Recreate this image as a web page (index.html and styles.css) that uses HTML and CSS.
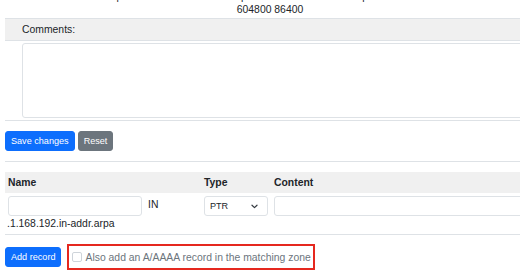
FILE: index.html
```html
<!DOCTYPE html>
<html lang="en">
<head>
  <meta charset="UTF-8" />
  <title>Zone 1.168.192.in-addr.arpa</title>
  <link rel="stylesheet" href="styles.css">
</head>
<body>
  <div class="page">
    <div class="soa">
      <div class="soa-line">
        <span class="c-ttl">1</span>
        <span class="c-name">1.168.192.in-addr.arpa</span>
        <span class="c-type">SOA</span>
        <span class="c-content">ns1.example.com. hostmaster.example.com. 2024010101 10800 3600</span>
      </div>
      <div class="soa-wrap">604800 86400</div>
    </div>

    <div class="comments-label">Comments:</div>
    <div class="comments-box">
      <textarea class="comments"></textarea>
    </div>

    <div class="actions">
      <button class="btn btn-primary">Save changes</button>
      <button class="btn btn-secondary">Reset</button>
    </div>

    <div class="record-table">
      <div class="th">Name</div>
      <div class="th">Type</div>
      <div class="th">Content</div>

      <div class="td">
        <div class="name-line">
          <input type="text" class="field name-input">
          <span class="in">IN</span>
        </div>
        <div class="suffix">.1.168.192.in-addr.arpa</div>
      </div>
      <div class="td">
        <div class="select-wrap">
          <select class="field type-select">
            <option>PTR</option>
          </select>
          <svg class="chevron" width="7" height="5" viewBox="0 0 7 5">
            <path d="M1 1.2 L3.5 3.6 L6 1.2" fill="none" stroke="#343a40" stroke-width="1.2" stroke-linecap="round" stroke-linejoin="round"/>
          </svg>
        </div>
      </div>
      <div class="td">
        <input type="text" class="field content-input">
      </div>
    </div>

    <div class="add-row">
      <button class="btn btn-primary">Add record</button>
      <label class="also">
        <input type="checkbox" class="check">
        Also add an A/AAAA record in the matching zone
      </label>
    </div>
  </div>
</body>
</html>
```

FILE: styles.css
```css
html, body {
  margin: 0;
  padding: 0;
  overflow: hidden;
  background: #fff;
  font-family: "Liberation Sans", Arial, sans-serif;
  font-size: 10.4px;
  color: #212529;
}

.page {
  padding-left: 5px;
}

.soa {
  margin-top: -10px;
  line-height: 13px;
}

.soa-line {
  display: flex;
  white-space: nowrap;
}

.c-ttl {
  width: 20px;
  padding-left: 2px;
}

.c-name {
  width: 135px;
}

.c-type {
  width: 75px;
}

.soa-wrap {
  text-align: center;
  padding-left: 15px;
}

.comments-label {
  margin-top: 2px;
  border-top: 1px solid #dee2e6;
  border-bottom: 1px solid #dee2e6;
  background: #f0f0f0;
  line-height: 21px;
  padding-left: 17px;
}

.comments-box {
  padding: 2px 0 2px 17px;
  border-bottom: 1px solid #dee2e6;
}

.comments {
  display: block;
  box-sizing: border-box;
  width: 520px;
  height: 75px;
  border: 1px solid #dee2e6;
  border-radius: 3px;
  resize: none;
  font: inherit;
}

.actions {
  display: flex;
  gap: 3px;
  padding: 10px 0;
  border-bottom: 1px solid #dee2e6;
}

.btn {
  font-family: inherit;
  font-size: 9.1px;
  height: 20px;
  padding: 0 5px;
  border-radius: 3px;
  color: #fff;
  cursor: pointer;
}

.btn-primary {
  background: #0d6efd;
  border: 1px solid #0d6efd;
}

.btn-secondary {
  background: #6c757d;
  border: 1px solid #6c757d;
}

.record-table {
  display: grid;
  grid-template-columns: 196px 70px 1fr;
  margin-top: 10px;
  border-bottom: 1px solid #dee2e6;
}

.th {
  background: #f0f0f0;
  font-weight: bold;
  line-height: 21px;
  padding: 0 3px;
}

.td {
  padding: 3px 3px 2px;
}

.name-line {
  display: flex;
  align-items: flex-start;
  gap: 6px;
}

.field {
  box-sizing: border-box;
  height: 20px;
  border: 1px solid #dee2e6;
  border-radius: 3px;
  background: #fff;
  font: inherit;
  margin: 0;
}

.name-input {
  width: 134px;
}

.in {
  line-height: 16px;
  padding-top: 1px;
}

.suffix {
  line-height: 16px;
  margin-left: -1px;
}

.select-wrap {
  position: relative;
  width: 64px;
}

.type-select {
  -webkit-appearance: none;
  appearance: none;
  width: 64px;
  padding: 0 0 0 5px;
  font-size: 9.1px;
  color: #212529;
}

.chevron {
  position: absolute;
  right: 10px;
  top: 8px;
}

.content-input {
  width: 260px;
}

.add-row {
  display: flex;
  align-items: center;
  gap: 6px;
  padding-top: 9px;
}

.also {
  display: flex;
  align-items: center;
  gap: 3px;
  height: 22px;
  padding: 0 2px 0 1px;
  border: 2px solid #e5281f;
  color: #6c757d;
}

.check {
  -webkit-appearance: none;
  appearance: none;
  width: 10px;
  height: 10px;
  margin: 0 0 0 2px;
  border: 1px solid #ced4da;
  border-radius: 2px;
  background: #fff;
}
```
